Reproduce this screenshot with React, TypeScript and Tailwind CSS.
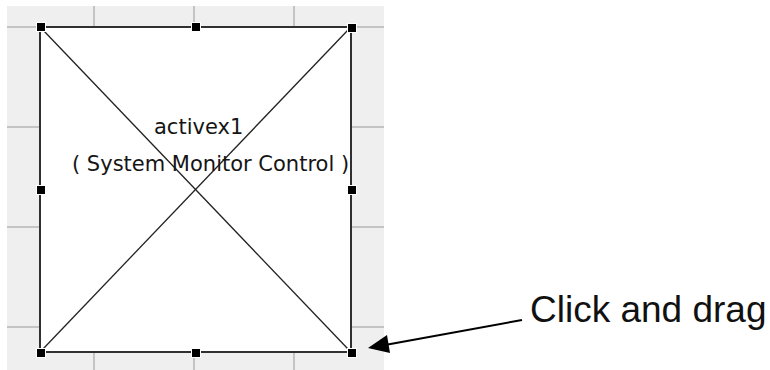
const handles = [
  "left-[29px] top-[16px]",
  "left-[184px] top-[16px]",
  "left-[340px] top-[17px]",
  "left-[29px] top-[179px]",
  "left-[340px] top-[179px]",
  "left-[29px] top-[342px]",
  "left-[184px] top-[342px]",
  "left-[340px] top-[342px]",
];

const ControlBox = () => {
  return (
    <div className="absolute left-[32px] top-[20px] w-[313px] h-[327px] border-2 border-[#303030] bg-white">
      <svg className="absolute inset-0 w-full h-full" viewBox="0 0 309 323" preserveAspectRatio="none">
        <line x1="2" y1="2" x2="307" y2="321" stroke="#222" strokeWidth="1.3" />
        <line x1="307" y1="2" x2="2" y2="321" stroke="#222" strokeWidth="1.3" />
      </svg>
      <div className="relative flex flex-col pt-[81px] text-[21px] leading-[37px] text-[#151515] font-['DejaVu_Sans',sans-serif] whitespace-nowrap">
        <span className="ml-[113px]">activex1</span>
        <span className="ml-[31px]">( System Monitor Control )</span>
      </div>
    </div>
  );
};

const Canvas = () => {
  return (
    <div className="relative mt-[6px] ml-[7px] w-[377px] h-[364px] shrink-0 bg-[#efefef] bg-[linear-gradient(to_right,#c4c4c4_2px,transparent_2px),linear-gradient(to_bottom,#c4c4c4_2px,transparent_2px)] bg-[size:100px_100px] bg-[position:86px_20px]">
      <ControlBox />
      {handles.map((h, i) => (
        <div key={i} className={`absolute w-[10px] h-[10px] bg-black border border-white ${h}`} />
      ))}
    </div>
  );
};

export default function App() {
  return (
    <div className="relative flex items-start w-[770px] h-[370px] overflow-hidden bg-white">
      <Canvas />
      <div className="ml-[146px] mt-[291px] text-[37px] leading-[37px] text-[#111] font-['Liberation_Sans',Arial,sans-serif] whitespace-nowrap">
        Click and drag
      </div>
      <svg className="absolute inset-0 pointer-events-none" width="770" height="370" viewBox="0 0 770 370">
        <line x1="522" y1="320" x2="385" y2="345" stroke="#000" strokeWidth="2" />
        <polygon points="368,348 390,353 387,335" fill="#000" />
      </svg>
    </div>
  );
}
